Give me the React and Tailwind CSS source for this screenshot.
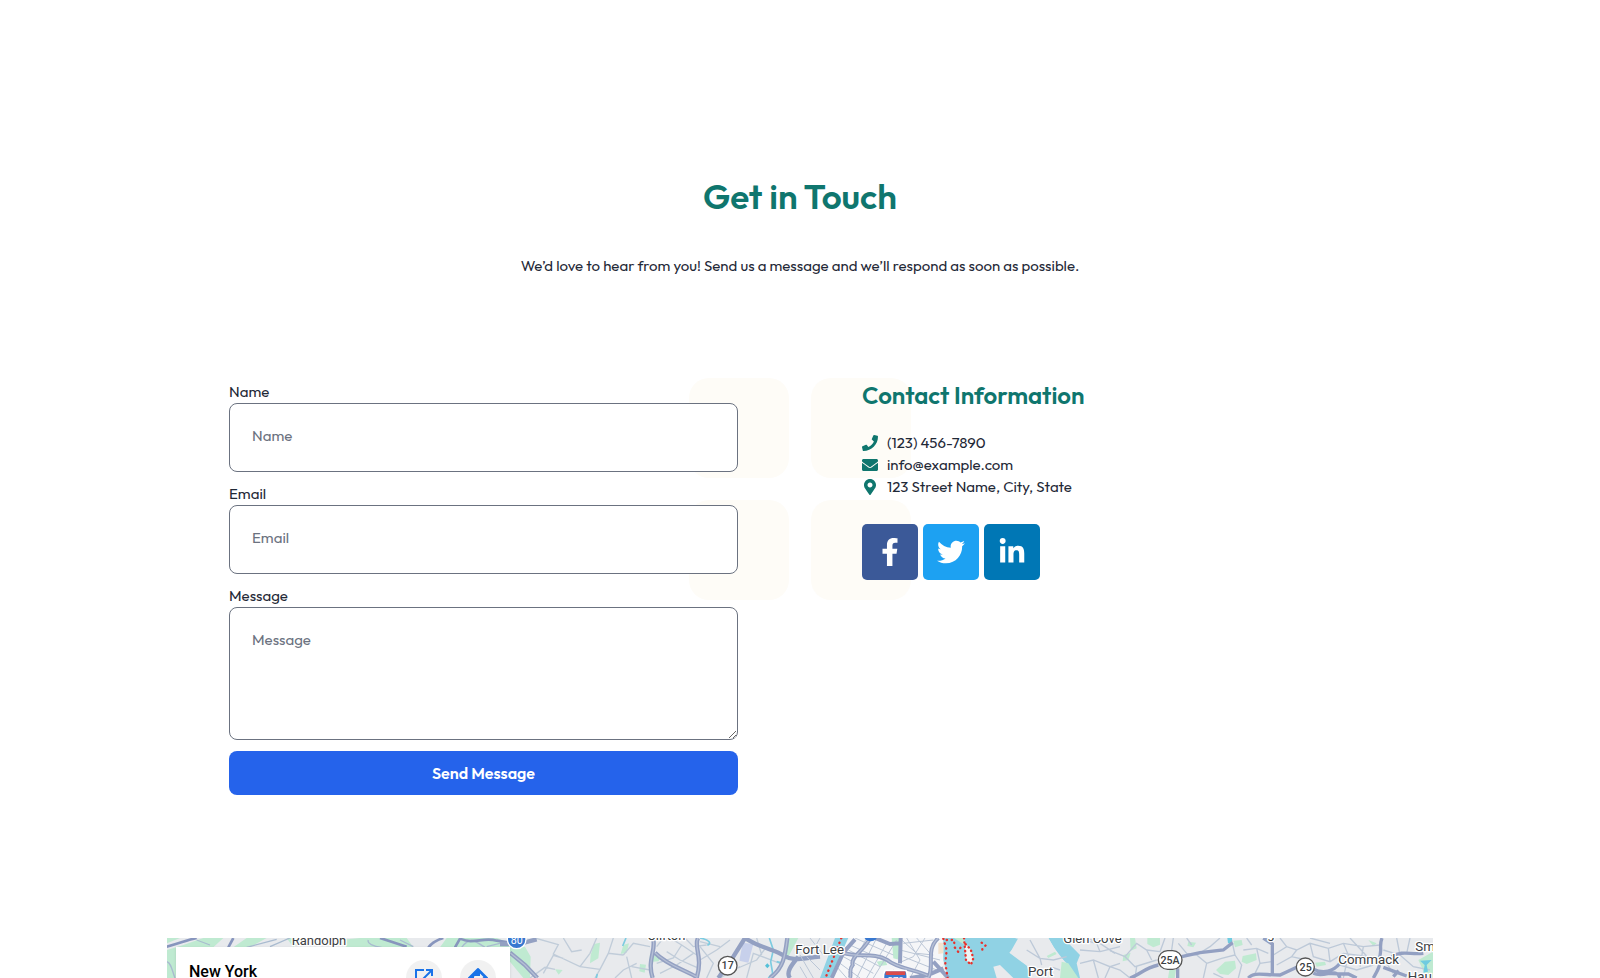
import React from "react";
import {
  FaEnvelope,
  FaFacebookF,
  FaLinkedinIn,
  FaMapMarkerAlt,
  FaPhone,
  FaTwitter,
} from "react-icons/fa";

const fieldClass =
  "block w-full rounded-lg border border-[#6b7280] bg-white px-[22px] text-[15px] text-[#1f2937] placeholder:text-[#6b7280]";

const contacts = [
  { icon: FaPhone, text: "(123) 456-7890" },
  { icon: FaEnvelope, text: "info@example.com" },
  { icon: FaMapMarkerAlt, text: "123 Street Name, City, State" },
];

const socials = [
  { icon: FaFacebookF, label: "Facebook", color: "bg-[#3b5998]" },
  { icon: FaTwitter, label: "Twitter", color: "bg-[#1da1f2]" },
  { icon: FaLinkedinIn, label: "LinkedIn", color: "bg-[#0077b5]" },
];

function ContactForm() {
  return (
    <form className="flex flex-col gap-[11px] pt-[3px]" onSubmit={(e) => e.preventDefault()}>
      <div>
        <label htmlFor="name" className="block leading-[22px]">Name</label>
        <input id="name" type="text" placeholder="Name" className={`${fieldClass} h-[69px] pb-1`} />
      </div>
      <div>
        <label htmlFor="email" className="block leading-[22px]">Email</label>
        <input id="email" type="email" placeholder="Email" className={`${fieldClass} h-[69px] pb-1`} />
      </div>
      <div>
        <label htmlFor="message" className="block leading-[22px]">Message</label>
        <textarea
          id="message"
          placeholder="Message"
          className={`${fieldClass} h-[133px] resize py-[21px]`}
        />
      </div>
      <button
        type="submit"
        className="h-11 rounded-lg bg-[#2563eb] text-base font-semibold text-white"
      >
        Send Message
      </button>
    </form>
  );
}

function ContactInfo() {
  return (
    <div>
      <h3 className="text-2xl leading-[34px] font-semibold text-[#0f766e]">
        Contact Information
      </h3>
      <ul className="mt-5">
        {contacts.map(({ icon: Icon, text }) => (
          <li key={text} className="flex h-[22px] items-center gap-[9px]">
            <Icon className="size-4 text-[#0f766e]" />
            <span>{text}</span>
          </li>
        ))}
      </ul>
      <div className="mt-[26px] flex gap-[5px]">
        {socials.map(({ icon: Icon, label, color }) => (
          <a
            key={label}
            href="#"
            aria-label={label}
            className={`flex size-14 items-center justify-center rounded-[5px] text-white ${color}`}
          >
            <Icon className="size-7" />
          </a>
        ))}
      </div>
    </div>
  );
}

function MapLabel({ x, y, size = 39, children }) {
  return (
    <text
      x={x}
      y={y}
      fontSize={size}
      fill="#3c4043"
      stroke="#fff"
      strokeWidth="8"
      strokeLinejoin="round"
      paintOrder="stroke"
    >
      {children}
    </text>
  );
}

function RoadMap() {
  return (
    <svg
      viewBox="0 24 3798 120"
      preserveAspectRatio="xMidYMin slice"
      className="block h-full w-full"
      fontFamily="Roboto, sans-serif"
      aria-hidden="true"
    >
      <rect y="24" width="3798" height="120" fill="#e8eaed" />

      {/* Randolph */}
      <g transform="translate(-21 0)" fill="none">
        <path
          fill="#bfead1"
          d="M20 24H60L20 40ZM20 60L70 45 130 24H190L160 52H48V144H20ZM220 52L260 24H320L270 52ZM380 24H430L400 52ZM540 30L600 24H740L760 52H560ZM860 24H1010L1080 50V100L1050 70V52H840Z"
        />
        <path stroke="#a9bbd0" strokeWidth="4" d="M20 95C35 100 35 120 45 144M110 30L150 45M260 52L350 28M330 50L390 24M625 30C620 40 640 50 665 52M720 30L760 50M905 52C930 20 940 30 975 52M980 50L1040 35" />
        <path stroke="#8795bd" strokeWidth="8" d="M20 50C60 40 80 30 110 24M205 52L220 24M660 24L740 50M805 52C815 40 830 30 850 24M885 52L900 26C940 45 970 20 1010 32L1080 42M1048 60L1085 95" />
      </g>

      {/* Clifton */}
      <g transform="translate(999 0)" fill="none">
        <path
          fill="#bfead1"
          d="M30 45L75 50 92 80 90 144H70L30 95ZM282 42L300 38 295 85 270 100 272 75ZM370 45L387 40 380 68 362 72ZM420 102L438 104 434 128 418 124ZM165 118L188 120 176 134ZM450 72L480 80 476 94 448 96ZM868 24H895L860 90 850 80Z"
        />
        <path fill="#c7d0eb" d="M728 38L760 42 745 98 718 92Z" />
        <path
          stroke="#c0ccd9"
          strokeWidth="4"
          d="M105 24L175 44 160 72 240 110 300 118M130 130L160 76 190 85M190 24L215 65 245 60M240 110L270 70 290 24M300 118L285 144M300 118L325 70 370 75M325 70L340 24M370 75L400 40 450 50M380 80L395 144M395 110L450 120M345 144L370 120 410 100M470 100L520 84 545 45M480 130L530 105 580 70M500 65L540 90 590 112M520 30L545 45 590 75M600 90L650 60 690 30M620 144L640 100 600 50M600 35L660 50M700 120L770 90 800 50M740 144L760 70 840 100M770 24L785 75M90 144L135 112 165 118M490 24L470 50M555 24L580 50 620 45M660 144L720 110"
        />
        <path stroke="#7ccbe0" strokeWidth="5" d="M378 24L368 48M289 144L292 132M600 24C630 30 635 40 622 46M808 24L820 60 812 95 818 130 805 144M850 100L830 95" />
        <path fill="#55c0d8" d="M802 100L809 107 802 115 795 107Z" />
        <path stroke="#93a0c2" strokeWidth="13" d="M30 68L75 105 112 144M459 24C470 60 440 90 458 144M465 68C500 105 555 120 588 140M594 24C580 50 610 80 590 144M735 24L700 80 655 144M735 24C780 55 830 60 848 75 880 95 900 85 960 80M862 24C855 80 850 115 810 144M870 144C855 125 880 100 895 80M0 42H55L110 28" />
        <path stroke="#b5bfd6" strokeWidth="4" d="M30 68L75 105 112 144M459 24C470 60 440 90 458 144M465 68C500 105 555 120 588 140M594 24C580 50 610 80 590 144M862 24C855 80 850 115 810 144" />
        <circle cx="50" cy="28" r="28" fill="#3878d0" stroke="#fff" strokeWidth="4" />
        <text x="50" y="41" fontSize="32" fill="#fff" textAnchor="middle">80</text>
        <circle cx="683" cy="107" r="28" fill="#fff" stroke="#555" strokeWidth="4" />
        <text x="683" y="118" fontSize="32" fill="#3c4043" textAnchor="middle" fontWeight="500">17</text>
      </g>

      {/* Fort Lee to Port Washington */}
      <g transform="translate(1899 0)" fill="none">
        <path fill="#f5f6f8" d="M140 24H430V144H100Z" />
        <path fill="#90d2e4" d="M105 24H145L90 144H60ZM430 24H645L665 30 628 68 660 92 685 110 690 144H640L600 105 580 110 590 144H445L430 90ZM745 24H790L840 75 830 100 840 144H810L790 90 760 50Z" />
        <path fill="#e8eaed" d="M655 24H745L775 75 800 100 815 144H690L680 105 630 68Z" />
        <path fill="#bfead1" d="M275 24H300V90L280 85ZM230 95L255 90 262 105 238 108ZM462 24H490L494 45ZM740 78L765 65 770 72 745 84ZM785 95L805 100 835 144H780Z" />
        <path fill="#f3e3cf" d="M415 38H430V70L415 72Z" />
        <path
          stroke="#bbc6d6"
          strokeWidth="3"
          d="M0 75L40 144M0 110L20 144M20 80L60 120M30 24L70 75M60 24L40 60 5 45M165 24L280 75M150 45L270 100M145 60L240 110M130 80L220 130M120 100L180 144M230 24L170 144M260 40L200 144M200 24L155 110M290 30L220 144M310 40L400 30M300 60L420 90M310 80L410 120M320 24L360 90 330 144M350 24L390 70 400 130M375 24L340 80 305 95M305 30L350 70 400 75M280 120L320 144M110 110L140 144"
        />
        <path stroke="#bdc9d8" strokeWidth="4" d="M690 30L720 85 760 90 800 80M680 60L720 85 725 105M840 60L900 65 960 50M840 100L880 90 930 110 960 100M880 90L895 144M900 65L890 40 850 30M930 110L915 144M860 24L900 40 945 70M750 110L780 120" />
        <path stroke="#93a0c2" strokeWidth="12" d="M130 68C170 85 220 65 262 90 290 115 350 120 382 136L430 115M210 24C195 60 150 80 158 105 145 120 155 130 150 144M302 24L300 100M415 24C375 60 405 105 385 144M225 24L270 42 300 40M400 95L445 144M382 136L330 144M165 28L130 68 95 144" />
        <path stroke="#b5bfd6" strokeWidth="4" d="M130 68C170 85 220 65 262 90 290 115 350 120 382 136M210 24C195 60 150 80 158 105 145 120 155 130 150 144M415 24C375 60 405 105 385 144" />
        <path fill="#eef4f3" stroke="#e5322d" strokeWidth="7" strokeLinecap="round" strokeDasharray="1 12" d="M492 24L498 90 513 104 520 85 512 58 496 42" />
        <path stroke="#e5322d" strokeWidth="7" strokeLinecap="round" strokeDasharray="1 14" d="M124 24L78 140M430 26L440 60 436 100 443 144M440 30L462 30 464 52 475 66 482 52M545 38L557 46 547 56 547 68" />
        <circle cx="212" cy="12" r="22" fill="#3878d0" />
        <path fill="#3878d0" stroke="#fff" strokeWidth="5" d="M255 122H318C326 135 320 150 320 160H252C252 150 246 135 255 122Z" />
        <path fill="#d94b4b" d="M257 124H316V135H257Z" />
        <text x="287" y="161" fontSize="29" fill="#fff" textAnchor="middle">278</text>
      </g>

      {/* North shore */}
      <g transform="translate(2829 0)" fill="none">
        <path
          fill="#bfead1"
          d="M60 24H75L80 55 62 62ZM112 24H150V44L130 52 112 42ZM40 75L62 68 55 90 38 94ZM178 120H198L194 144H174ZM235 35L258 38 250 52 232 48ZM318 120L345 95 375 92 378 115 355 135 330 132ZM370 32L395 30 398 45 375 52ZM398 78L438 70 440 90 410 102 395 95ZM615 98L645 95 648 105 620 110ZM775 30L800 40 790 48ZM925 90L969 65V144H950Z"
        />
        <path
          stroke="#bdc9d8"
          strokeWidth="4"
          d="M0 62L45 80 75 110 140 90M45 80L80 40 110 60 150 65M110 60L125 90M0 110L30 120 60 144M80 110L75 144M150 65L165 24M190 24L185 60M205 40L230 70 260 75 300 50M230 24L245 45M280 144L290 100 260 75M290 100L335 85 375 75 365 30M300 50L330 24M310 130L340 144M375 75L395 105 385 144M400 60L440 55 475 70M410 24L425 45M440 55L450 100 435 130M450 100L485 95M490 75L530 50 560 60 600 40 655 55 700 40 760 50 810 45M530 50L510 24M500 105L545 80 590 90M545 80L560 60M600 40L610 80 660 95 700 70 760 78 800 90M655 55L660 95M700 40L715 75 700 144M760 50L750 110M690 105L740 120 790 105M820 60L870 75 910 110 960 120M870 75L860 24M830 100L850 130M900 24L890 70M600 24L660 40M720 24L770 78"
        />
        <path fill="#6fcbe0" d="M352 24H366V40H354ZM930 92L965 90 950 105 954 125 940 128 944 105Z" />
        <path stroke="#93a0c2" strokeWidth="10" d="M60 144C90 135 100 115 145 105M215 80L270 68 340 60 368 38M203 115V144M460 24L487 42V132M415 144C430 125 460 135 510 135L560 112M610 118C640 132 670 125 690 100M610 130C645 145 680 110 690 144M816 24C805 50 820 65 805 90 815 105 800 125 790 144M820 112L890 138M850 140L866 122M845 80C880 60 900 75 940 70M640 130L715 132 740 144" />
        <rect x="145" y="62" width="71" height="56" rx="28" fill="#fff" stroke="#555" strokeWidth="4" />
        <text x="180" y="101" fontSize="32" fill="#3c4043" textAnchor="middle" fontWeight="500">25A</text>
        <circle cx="586" cy="111" r="27" fill="#fff" stroke="#555" strokeWidth="4" />
        <text x="587" y="122" fontSize="32" fill="#3c4043" textAnchor="middle" fontWeight="500">25</text>
      </g>

      <MapLabel x={374} y={44}>Randolph</MapLabel>
      <MapLabel x={1441} y={31}>Clifton</MapLabel>
      <MapLabel x={1885} y={71} size={40}>Fort Lee</MapLabel>
      <MapLabel x={2583} y={137} size={40}>Port</MapLabel>
      <MapLabel x={2689} y={38}>Glen Cove</MapLabel>
      <MapLabel x={3301} y={24}>g</MapLabel>
      <MapLabel x={3514} y={101} size={40}>Commack</MapLabel>
      <MapLabel x={3745} y={63} size={40}>Sm</MapLabel>
      <MapLabel x={3722} y={153} size={40}>Hau</MapLabel>
    </svg>
  );
}

function MapCard() {
  return (
    <div className="absolute top-[9px] left-[9px] flex h-24 w-[334px] items-start bg-white pt-[13px] pr-[14px] pl-[13px] shadow-sm">
      <p className="flex-1 pt-px font-[Roboto,sans-serif] text-base leading-[22px] font-medium text-black">
        New York
      </p>
      <div className="flex gap-[18px]">
        <button
          type="button"
          aria-label="Open larger map"
          className="flex size-9 items-center justify-center rounded-full bg-[#f1f1f1]"
        >
          <svg viewBox="0 0 24 24" className="size-6 text-[#1a73e8]" fill="currentColor">
            <path d="M19 19H5V5h7V3H3v18h18v-9h-2v7zM14 3v2h3.6l-9.8 9.8 1.4 1.4L19 6.400V10h2V3h-7z" />
          </svg>
        </button>
        <button
          type="button"
          aria-label="Directions"
          className="flex size-9 items-center justify-center rounded-full bg-[#f1f1f1]"
        >
          <svg viewBox="0 0 24 24" className="size-6 text-[#1a73e8]" fill="currentColor">
            <path d="M21.700 11.300l-9-9a1 1 0 0 0-1.400 0l-9 9a1 1 0 0 0 0 1.400l9 9a1 1 0 0 0 1.400 0l9-9a1 1 0 0 0 0-1.400zM14 14.500V12h-4v3H8v-4a1 1 0 0 1 1-1h5V7.500l3.500 3.500-3.500 3.500z" />
          </svg>
        </button>
      </div>
    </div>
  );
}

export default function App() {
  return (
    <main className="mx-auto w-full max-w-[1266px] bg-white pt-[172px] font-[Outfit,Lato,sans-serif] text-[15px] text-[#1f2937]">
      <header className="text-center">
        <h2 className="text-[35px] leading-[48px] font-semibold text-[#0f766e]">Get in Touch</h2>
        <p className="mt-[34px] leading-6">
          We’d love to hear from you! Send us a message and we’ll respond as soon as possible.
        </p>
      </header>

      <section className="relative isolate mt-[100px] grid grid-cols-2 gap-[124px] px-[62px]">
        <div
          aria-hidden="true"
          className="absolute top-0 left-1/2 -z-10 grid -translate-x-1/2 grid-cols-2 gap-[22px]"
        >
          <span className="size-[100px] rounded-[20px] bg-[#fefcf7]" />
          <span className="size-[100px] rounded-[20px] bg-[#fefcf7]" />
          <span className="size-[100px] rounded-[20px] bg-[#fefcf7]" />
          <span className="size-[100px] rounded-[20px] bg-[#fefcf7]" />
        </div>
        <ContactForm />
        <ContactInfo />
      </section>

      <section aria-label="Map" className="relative mt-[143px] h-10 overflow-hidden">
        <RoadMap />
        <MapCard />
      </section>
    </main>
  );
}
